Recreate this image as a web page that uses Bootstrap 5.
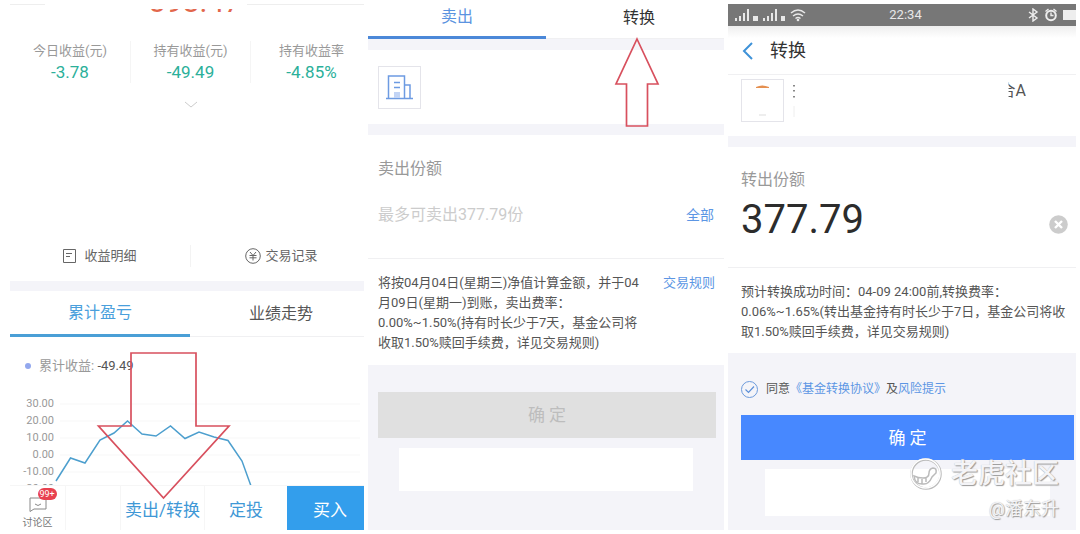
<!DOCTYPE html>
<html lang="zh-CN">
<head>
<meta charset="utf-8">
<meta name="viewport" content="width=device-width, initial-scale=1">
<title>基金转换</title>
<link rel="stylesheet" href="https://cdn.jsdelivr.net/npm/bootstrap@5.3.0/dist/css/bootstrap.min.css">
<style>
body{font-family:Roboto,"Noto Sans CJK SC",sans-serif;font-size:13px;line-height:20px;color:#555;background:#fff}
a{text-decoration:none;color:#5c96e4}
svg{display:block}
button{border:0;background:none;padding:0;color:inherit;white-space:nowrap}
.screens{display:grid;grid-template-columns:minmax(0,354fr) minmax(0,356fr) minmax(0,348fr);gap:4px;padding:4px 4px 4px 10px}
.soft{background:#f4f4f9}
.band{height:11px;background:#f4f4f9}
.band.slim{height:10px}
.t14{font-size:14px}.t16{font-size:16px}.t18{font-size:18px}
.muted{color:#999}
.rule{border-bottom:1px solid #f0f0f2}
/* earnings screen */
.total-lines{height:1px;background:linear-gradient(90deg,#eee 10%,transparent 10%,transparent 67%,#eee 67%)}
.total-value{height:4px;overflow:hidden;font-size:30px;line-height:22px;color:#e2674c}
.stats{display:grid;grid-template-columns:120fr 120fr 114fr;margin-top:28px;text-align:center}
.stats>div+div{border-left:1px solid #f5f5f5}
.stats dt{font-weight:400;color:#999}
.stats dd{margin:0;font-size:17px;line-height:22px;color:#2bb09a}
.more{margin:18px auto 0}
.split{display:grid;grid-template-columns:180fr 174fr}
.tabs a{display:flex;align-items:center;justify-content:center;font-size:16px;color:#555;border-bottom:1px solid #f0f0f2}
.tabs a.on{color:#4a9fdc;border-bottom:3px solid #4a9fd6}
.tabs.tall a{height:46px}
.tabs.low{display:grid;grid-template-columns:1fr 1fr}
.tabs.low a{height:35px;padding-bottom:6px;color:#333}
.tabs.low a.on{color:#5b93e0;border-color:#4b88d8}
.actions{margin-top:136px;height:36px}
.actions button{color:#666;height:22px}
.actions button+button{border-left:1px solid #f3f3f3}
.dot{width:6px;height:6px;border-radius:50%;background:#93a8ee}
.legend{padding:19px 15px 0}
.plot{height:90px;margin-top:19px;overflow:hidden}
.axis{width:44px;font-size:11px;line-height:17px;color:#999;text-align:right}
.barnav{display:grid;grid-template-columns:55fr 55fr 84fr 83fr 77fr;height:45px;border-top:1px solid #f6f6f6;background:#fff}
.barnav>*+*{border-left:1px solid #f6f6f6}
.barnav button{font-size:17px;color:#3f98d6}
.barnav .buy{background:#339eec;color:#fff;border-color:#339eec}
.barnav .talk{font-size:10px;line-height:14px;color:#777}
.count{position:absolute;left:9px;top:-9px;font-size:9px;line-height:12px;padding:0 2px;border-radius:6px;background:#e8414f;color:#fff}
.mark-down{position:absolute;left:86px;top:347px}
.mark-up{position:absolute;left:69%;top:30px}
/* sell screen */
.thumb{width:43px;height:43px;border:1px solid #e4e4ea;background:#fff}
.fund{height:74px;padding:0 10px}
.amount{padding:24px 10px 0;height:124px}
.amount-row{margin-top:26px}
.field{border:0;outline:0;padding:0;width:100%;min-width:0;background:none;color:#2c2c2c}
.field::placeholder{color:#ccc;opacity:1}
.link-blue{color:#5c96e4}
.note{padding:14px 9px 12px 10px}
.submit{height:46px;width:100%;font-size:17px}
.submit:disabled{background:#e0e0e0;color:#bdbdbd}
.blank{background:#fff}
.foot{padding:27px 8px 0 10px}
.foot .blank{height:43px;margin:10px 23px 0 21px}
/* convert screen */
.status{height:22px;background:#777;color:#e8e8e8;padding:0 0 0 7px;display:grid;grid-template-columns:1fr auto 1fr;align-items:center}
.heading{height:49px;padding:1px 14px 0;color:#333;background:linear-gradient(#eee,#fff 12px)}
.fundrow{height:61px;padding:4px 0 0 13px}
.cutname{clip-path:inset(0 0 0 9px);margin-right:50px;margin-top:2px;color:#555}
.convert .amount{padding:23px 8px 0 13px;height:121px}
.convert .note{padding:14px 0 11px 13px}
.convert .foot{padding:26px 2px 0 13px}
.convert .foot .blank{margin:9px 24px 14px;height:47px}
.big{font-size:40px;line-height:44px;height:44px}
.agree{font-size:12px}
.agree input{appearance:none;width:17px;height:17px;margin:0 8px 0 0;border:1px solid #6d9bdc;border-radius:50%;background:url("data:image/svg+xml,%3Csvg xmlns='http://www.w3.org/2000/svg' viewBox='0 0 15 15'%3E%3Cpath d='M3.5 7.5l3 3 5.500-6' fill='none' stroke='%235c8fd8' stroke-width='1.200'/%3E%3C/svg%3E") center/15px no-repeat}
.submit.go{background:#4788ff;color:#fff;height:45px}
.stamp{position:absolute;right:17px;bottom:11px;color:#f4f4f7;text-shadow:1px 1px 1px #999,0 0 1px #bbb}
.stamp .brand{font-size:27px;line-height:34px;font-weight:500}
</style>
</head>
<body>
<main class="screens">

<section class="position-relative d-flex flex-column">
  <div class="total-lines"></div>
  <div class="total-value d-flex justify-content-center align-items-end mt-1 ps-3"><span>398.47</span></div>
  <dl class="stats mb-0">
    <div><dt>今日收益(元)</dt><dd>-3.78</dd></div>
    <div><dt>持有收益(元)</dt><dd>-49.49</dd></div>
    <div class="ps-2"><dt>持有收益率</dt><dd>-4.85%</dd></div>
  </dl>
  <div class="ps-2"><svg class="more" width="14" height="8" fill="none" stroke="#ccc"><path d="M1 1l6 5 6-5"/></svg></div>
  <div class="split actions">
    <button class="d-flex align-items-center justify-content-center gap-2"><svg width="13" height="14" fill="none" stroke="#666"><path d="M.5.5h12v13H.5zM3 4.500h6M3 7.500h4"/></svg>收益明细</button>
    <button class="d-flex align-items-center justify-content-center gap-1 ps-2"><svg width="16" height="16" fill="none" stroke="#666"><circle cx="8" cy="8" r="7.300"/><path d="M5 4l3 3.500L11 4M4.500 7.500h7M4.500 9.800h7M8 7.500V12.500"/></svg>交易记录</button>
  </div>
  <div class="band slim"></div>
  <nav class="split tabs tall"><a class="on" href="#">累计盈亏</a><a class="ps-2" href="#">业绩走势</a></nav>
  <div class="legend d-flex align-items-center"><span class="dot me-2"></span><span class="muted">累计收益:&nbsp;</span><span>-49.49</span></div>
  <div class="plot d-flex">
    <div class="axis">30.00<br>20.00<br>10.00<br>0.00<br>-10.00<br>-20.00</div>
    <svg class="flex-grow-1" height="91" viewBox="0 0 310 91" preserveAspectRatio="none" fill="none">
      <path d="M6 9h300M6 26h300M6 43h300M6 60h300M6 77h300" stroke="#f7f7f7"/>
      <path d="M2 86L16.500 63 31 68 46 45 60 38 73.500 26 88 39 102 41 116.500 31 131 43.500 145 37 160 42 174 45.500 188 66 197 91" stroke="#4d9fce" stroke-width="1.500"/>
    </svg>
  </div>
  <div class="barnav">
    <button class="talk d-flex flex-column align-items-center justify-content-end">
      <span class="position-relative mb-1"><svg width="18" height="15" fill="none" stroke="#888"><path d="M1 1h16v11H5l-4 2.500zM6 7q3 3 6 0"/></svg><span class="count">99+</span></span>讨论区
    </button>
    <span></span>
    <button class="pt-1">卖出/转换</button>
    <button class="pt-1">定投</button>
    <button class="buy pt-1 ps-2">买入</button>
  </div>
  <svg class="mark-down" width="136" height="150" fill="none" stroke="#d8505e" stroke-width="1.700"><path d="M35 2h65v73h33L67.500 147 2.500 75H35z"/></svg>
</section>

<section class="position-relative d-flex flex-column">
  <nav class="tabs low"><a class="on" href="#">卖出</a><a class="ps-2" href="#">转换</a></nav>
  <div class="band"></div>
  <div class="fund d-flex align-items-center">
    <div class="thumb d-flex align-items-center justify-content-center"><svg width="28" height="26" fill="none" stroke="#6d9be2" stroke-width="1.500"><path d="M0 24.500h27M2.500 24V2h16v22M18.500 11h5.500v13M8 8.500h6M8 13.500h6"/><path d="M8 18h6v6H8z" fill="#c2d4f5" stroke="none"/></svg></div>
  </div>
  <div class="band"></div>
  <div class="amount rule">
    <label class="t16 muted d-block" for="sell">卖出份额</label>
    <div class="amount-row d-flex align-items-center">
      <input class="field t16" id="sell" placeholder="最多可卖出377.79份">
      <button class="t14 link-blue">全部</button>
    </div>
  </div>
  <div class="note d-flex justify-content-between gap-2">
    <div>将按04月04日(星期三)净值计算金额，并于04<br>月09日(星期一)到账，卖出费率：<br>0.00%~1.50%(持有时长少于7天，基金公司将<br>收取1.50%赎回手续费，详见交易规则)</div>
    <a class="text-nowrap" href="#">交易规则</a>
  </div>
  <div class="soft foot flex-grow-1">
    <button class="submit" disabled>确 定</button>
    <div class="blank"></div>
  </div>
  <svg class="mark-up" width="46" height="96" fill="none" stroke="#d8505e" stroke-width="1.700"><path d="M23 5L44 50H33.500V92H12.500V50H2z"/></svg>
</section>

<section class="convert position-relative d-flex flex-column">
  <div class="status">
    <svg width="72" height="14" fill="#e8e8e8"><path d="M0 10h2v3H0zM4 8h2v5H4zM8 5h2v8H8zM12 1h2v12h-2zM18 8h5v5h-5zM28 10h2v3h-2zM32 8h2v5h-2zM36 5h2v8h-2zM40 1h2v12h-2zM46 8h4v5h-4z"/><path d="M56 5q7-6 14 0M58 8q5-4 10 0M60.500 10.500q2.500-2 5 0" fill="none" stroke="#e8e8e8" stroke-width="1.500"/><circle cx="63" cy="12" r="1.300"/></svg>
    <time>22:34</time>
    <svg class="ms-auto" width="49" height="14" fill="none" stroke="#eee" stroke-width="1.400"><path d="M2 4l8 6-4 3V1l4 3-8 6"/><circle cx="24" cy="7.500" r="4.800" stroke-width="2"/><path d="M24 4.500v3h2.500M18.500 3.500l3-2.500M29.500 3.500L26.500 1"/><path d="M36 2h13v10H36z" fill="#eee" stroke="none"/></svg>
  </div>
  <div class="heading rule d-flex align-items-center">
    <button class="me-3" aria-label="返回"><svg width="12" height="18" fill="none" stroke="#3e92d8" stroke-width="2"><path d="M10 1L2 9l8 8"/></svg></button><span class="t18">转换</span>
  </div>
  <div class="fundrow d-flex align-items-start">
    <div class="thumb"><svg width="41" height="41"><path d="M14 7q6-3 13 0v1H14z" fill="#e59050"/><path d="M17 35h7" stroke="#ddd"/></svg></div>
    <svg class="ms-2 mt-1" width="4" height="36"><path d="M2 2v1.500M2 7v1.500M2 13v1.500" stroke="#888" stroke-width="2"/><path d="M2 23v11" stroke="#eee"/></svg>
    <span class="cutname t16 ms-auto">合A</span>
  </div>
  <div class="band"></div>
  <div class="amount rule">
    <label class="t16 muted d-block" for="conv">转出份额</label>
    <div class="d-flex align-items-center mt-2">
      <input class="field big" id="conv" value="377.79">
      <button class="pt-2 flex-shrink-0" aria-label="清除"><svg width="19" height="19"><circle cx="9.500" cy="9.500" r="9.300" fill="#ccc"/><path d="M6 6l7 7M13 6l-7 7" stroke="#fff" stroke-width="2.400"/></svg></button>
    </div>
  </div>
  <div class="note text-nowrap">预计转换成功时间：04-09 24:00前,转换费率：<br>0.06%~1.65%(转出基金持有时长少于7日，基金公司将收<br>取1.50%赎回手续费，详见交易规则)</div>
  <div class="soft foot flex-grow-1">
    <div class="agree d-flex align-items-center"><input type="checkbox" id="ok" checked><label for="ok">同意<a href="#">《基金转换协议》</a>及<a href="#">风险提示</a></label></div>
    <button class="submit go mt-3">确 定</button>
    <div class="blank"></div>
  </div>
  <div class="stamp text-end">
    <div class="d-flex align-items-center justify-content-end gap-2"><svg width="34" height="34" fill="none"><circle cx="17" cy="17" r="14.500" stroke="#bbb" stroke-width="2.500"/><circle cx="16.500" cy="16.500" r="14.500" stroke="#fff" stroke-width="1.500"/><path d="M5 19q1 9 10 8 5 0 8-7l4-4q1-5-3-5-4 1-4 5 0 5-6 5-5 0-9-2zM9 20v5M13 22v5M17 21v4" stroke="#bbb" stroke-width="1.500"/></svg><span class="brand">老虎社区</span></div>
    <div class="t18 mt-2">@潘东升</div>
  </div>
</section>
</main>
<script src="https://cdn.jsdelivr.net/npm/bootstrap@5.3.0/dist/js/bootstrap.bundle.min.js"></script>
</body>
</html>
